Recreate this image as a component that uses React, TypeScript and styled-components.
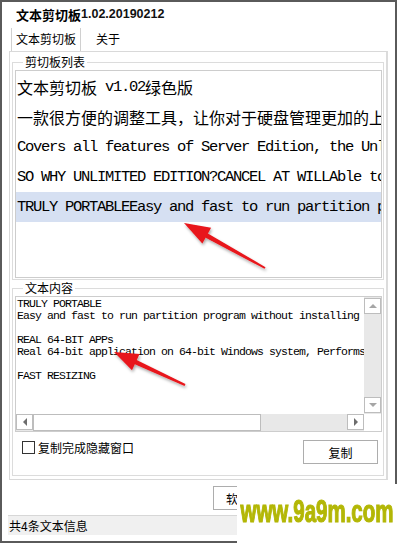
import React from "react";
import styled, { createGlobalStyle } from "styled-components";

const GlobalStyle = createGlobalStyle`
  html, body {
    margin: 0;
    padding: 0;
    background: #fff;
  }
  body {
    font-family: "Noto Sans CJK SC", "Liberation Sans", sans-serif;
    font-size: 12px;
    color: #000;
  }
`;

const Frame = styled.div`
  position: relative;
  width: 397px;
  height: 543px;
  overflow: hidden;
`;

const Window = styled.div`
  box-sizing: border-box;
  width: 397px;
  height: 543px;
  border: 2px solid #5a5a5a;
  padding: 0 7px;
  display: flex;
  flex-direction: column;
  background: #fff;
`;

const TitleBar = styled.div`
  height: 24px;
  display: flex;
  align-items: center;
  padding-left: 7px;
  font-weight: bold;
  white-space: nowrap;
`;

const TitleName = styled.span`
  font-size: 13px;
`;

const TitleVersion = styled.span`
  font-family: "Liberation Sans", sans-serif;
  font-size: 12.5px;
  font-weight: bold;
  color: #111;
`;

const TabStrip = styled.div`
  height: 25px;
  display: flex;
  align-items: flex-end;
  padding-left: 2px;
`;

const Tab = styled.div<{ $active?: boolean }>`
  box-sizing: border-box;
  height: 23px;
  display: flex;
  align-items: center;
  padding: 0 ${({ $active }) => ($active ? "4px" : "14px")} 2px;
  border-left: 1px solid ${({ $active }) => ($active ? "#d0d0d0" : "transparent")};
  border-right: 1px solid ${({ $active }) => ($active ? "#d0d0d0" : "transparent")};
  font-size: 12px;
`;

const TabPane = styled.div`
  box-sizing: border-box;
  height: 429px;
  border: 1px solid #d9d9d9;
  border-right: 2px solid #dcdcdc;
  padding: 0 2px 3px 2px;
  display: flex;
  flex-direction: column;
`;

const Group = styled.fieldset<{ $grow?: boolean }>`
  margin: ${({ $grow }) => ($grow ? "0" : "2px 0 0")};
  padding: 0 1px 1px 2px;
  border: 1px solid #dcdcdc;
  min-width: 0;
  flex: ${({ $grow }) => ($grow ? "1" : "none")};
  display: flex;
  flex-direction: column;
`;

const Legend = styled.legend`
  margin-left: 8px;
  padding: 0 2px;
  font-size: 12px;
  line-height: 16px;
`;

const ListBox = styled.div`
  box-sizing: border-box;
  height: 208px;
  border: 1px solid #cdcdcd;
  padding-top: 1px;
  overflow: hidden;
`;

const ListRow = styled.div<{ $selected?: boolean }>`
  height: 30px;
  line-height: 30px;
  padding-left: 1px;
  font-size: 16px;
  white-space: pre;
  overflow: hidden;
  background: ${({ $selected }) => ($selected ? "#d6e0f2" : "transparent")};
`;

const Latin = styled.span`
  font-family: "Liberation Mono", monospace;
  font-size: 15.5px;
  letter-spacing: -1.3px;
  vertical-align: top;
`;

const TextBox = styled.div`
  box-sizing: border-box;
  height: 136px;
  border: 1px solid #cdcdcd;
  display: grid;
  grid-template-columns: 1fr 17px;
  grid-template-rows: 1fr 17px;
`;

const TextContent = styled.div`
  padding: 1px 0 0 1px;
  overflow: hidden;
  font-family: "Liberation Mono", monospace;
  font-size: 11.5px;
  letter-spacing: -0.9px;
  line-height: 12px;
  white-space: pre;
`;

const VScroll = styled.div`
  background: #e8e8e8;
  display: flex;
  flex-direction: column;
  justify-content: space-between;
  padding: 1px 0;
`;

const HScroll = styled.div`
  background: #e8e8e8;
  display: flex;
  align-items: stretch;
`;

const ScrollButton = styled.div`
  box-sizing: border-box;
  width: 17px;
  height: 16px;
  border: 1px solid #bdbdbd;
  background: #fff;
  display: flex;
  align-items: center;
  justify-content: center;
`;

const HThumb = styled.div`
  box-sizing: border-box;
  width: 228px;
  border: 1px solid #bdbdbd;
  background: #fff;
`;

const HTrack = styled.div`
  flex: 1;
`;

const Corner = styled.div`
  background: #fff;
`;

const Arrow = styled.span<{ $dir: "up" | "down" | "left" | "right" }>`
  width: 0;
  height: 0;
  border: 3px solid transparent;
  ${({ $dir }) =>
    $dir === "up"
      ? "border-bottom: 4px solid #a6a6a6; border-top: 0; border-left-width: 4px; border-right-width: 4px;"
      : $dir === "down"
      ? "border-top: 4px solid #a6a6a6; border-bottom: 0; border-left-width: 4px; border-right-width: 4px;"
      : $dir === "left"
      ? "border-right: 4px solid #6d6d6d; border-left: 0; border-top-width: 4px; border-bottom-width: 4px;"
      : "border-left: 4px solid #6d6d6d; border-right: 0; border-top-width: 4px; border-bottom-width: 4px;"}
`;

const Controls = styled.div`
  height: 36px;
  display: flex;
  justify-content: space-between;
  align-items: flex-start;
  padding: 0 4px 0 7px;
`;

const CheckLabel = styled.label`
  margin-top: 7px;
  display: flex;
  align-items: center;
  gap: 3px;
  font-size: 12px;
`;

const CheckBox = styled.span`
  box-sizing: border-box;
  width: 13px;
  height: 13px;
  border: 1px solid #333;
  background: #fff;
`;

const Button = styled.div`
  box-sizing: border-box;
  width: 75px;
  height: 24px;
  margin-top: 8px;
  border: 1px solid #adadad;
  background: #fff;
  display: flex;
  align-items: center;
  justify-content: center;
  font-size: 12px;
`;

const Footer = styled.div`
  display: flex;
  padding-left: 204px;
  margin-top: 6px;
`;

const FooterButton = styled(Button)`
  margin-top: 0;
  justify-content: flex-start;
  padding-left: 12px;
`;

const StatusBar = styled.div`
  box-sizing: border-box;
  height: 20px;
  margin: 5px 0 0 -1px;
  border-top: 1px solid #d7d7d7;
  background: #f0f0f0;
  display: flex;
  align-items: center;
  padding-left: 1px;
  font-size: 12px;
`;

const Annotations = styled.svg`
  position: absolute;
  inset: 0;
  pointer-events: none;
`;

const Watermark = styled.div`
  position: absolute;
  left: 237px;
  top: 484px;
  right: 0;
  bottom: 0;
  background: #fff;
  display: flex;
  justify-content: center;
  align-items: flex-start;
  padding-top: 13px;
  box-sizing: border-box;
`;

const WatermarkText = styled.span`
  display: inline-block;
  font-family: "Liberation Sans", sans-serif;
  font-weight: bold;
  font-size: 20.5px;
  line-height: 18px;
  color: #b3b706;
  -webkit-text-stroke: 0.8px #b3b706;
  transform: scaleY(1.55);
  transform-origin: top;
  white-space: nowrap;
`;

const listItems: { text: React.ReactNode; selected?: boolean }[] = [
  {
    text: (
      <>
        文本剪切板<Latin>{" v1.02"}</Latin>绿色版
      </>
    ),
  },
  { text: "一款很方便的调整工具，让你对于硬盘管理更加的上手" },
  { text: <Latin>Covers all features of Server Edition, the Unlimited Edition</Latin> },
  { text: <Latin>SO WHY UNLIMITED EDITION?CANCEL AT WILLAble to</Latin> },
  { text: <Latin>TRULY PORTABLEEasy and fast to run partition program</Latin>, selected: true },
];

const content = `TRULY PORTABLE
Easy and fast to run partition program without installing it

REAL 64-BIT APPs
Real 64-bit application on 64-bit Windows system, Performs better

FAST RESIZING`;

function RedArrow({ tip, tail, len, half }: { tip: [number, number]; tail: [number, number]; len: number; half: number }) {
  const dx = tail[0] - tip[0];
  const dy = tail[1] - tip[1];
  const d = Math.hypot(dx, dy);
  const ux = dx / d;
  const uy = dy / d;
  const px = -uy;
  const py = ux;
  const bx = tip[0] + ux * len;
  const by = tip[1] + uy * len;
  const head = `${tip[0]},${tip[1]} ${bx + px * half},${by + py * half} ${bx - px * half},${by - py * half}`;
  const sw = 2.4;
  const shaft = `${bx - ux * 3 + px * sw},${by - uy * 3 + py * sw} ${tail[0] + px},${tail[1] + py} ${tail[0] - px},${tail[1] - py} ${bx - ux * 3 - px * sw},${by - uy * 3 - py * sw}`;
  return (
    <g filter="url(#shadow)">
      <polygon points={shaft} fill="#e8141a" />
      <polygon points={head} fill="#e8141a" />
    </g>
  );
}

export default function App() {
  return (
    <>
      <GlobalStyle />
      <Frame>
        <Window>
          <TitleBar>
            <TitleName>文本剪切板</TitleName>
            <TitleVersion>1.02.20190212</TitleVersion>
          </TitleBar>
          <TabStrip>
            <Tab $active>文本剪切板</Tab>
            <Tab>关于</Tab>
          </TabStrip>
          <TabPane>
            <Group>
              <Legend>剪切板列表</Legend>
              <ListBox>
                {listItems.map((item, i) => (
                  <ListRow key={i} $selected={item.selected}>
                    {item.text}
                  </ListRow>
                ))}
              </ListBox>
            </Group>
            <Group $grow>
              <Legend>文本内容</Legend>
              <TextBox>
                <TextContent>{content}</TextContent>
                <VScroll>
                  <ScrollButton>
                    <Arrow $dir="up" />
                  </ScrollButton>
                  <ScrollButton>
                    <Arrow $dir="down" />
                  </ScrollButton>
                </VScroll>
                <HScroll>
                  <ScrollButton>
                    <Arrow $dir="left" />
                  </ScrollButton>
                  <HThumb />
                  <HTrack />
                  <ScrollButton>
                    <Arrow $dir="right" />
                  </ScrollButton>
                </HScroll>
                <Corner />
              </TextBox>
              <Controls>
                <CheckLabel>
                  <CheckBox />
                  复制完成隐藏窗口
                </CheckLabel>
                <Button>复制</Button>
              </Controls>
            </Group>
          </TabPane>
          <Footer>
            <FooterButton>软</FooterButton>
          </Footer>
          <StatusBar>共4条文本信息</StatusBar>
        </Window>
        <Annotations width="397" height="543" viewBox="0 0 397 543">
          <defs>
            <filter id="shadow" x="-20%" y="-20%" width="140%" height="140%">
              <feDropShadow dx="1" dy="2" stdDeviation="1.5" floodColor="#000" floodOpacity="0.35" />
            </filter>
          </defs>
          <RedArrow tip={[184, 223]} tail={[265, 268]} len={26} half={9} />
          <RedArrow tip={[114, 352]} tail={[185, 385]} len={24} half={9} />
        </Annotations>
        <Watermark>
          <WatermarkText>www.9a9m.com</WatermarkText>
        </Watermark>
      </Frame>
    </>
  );
}
